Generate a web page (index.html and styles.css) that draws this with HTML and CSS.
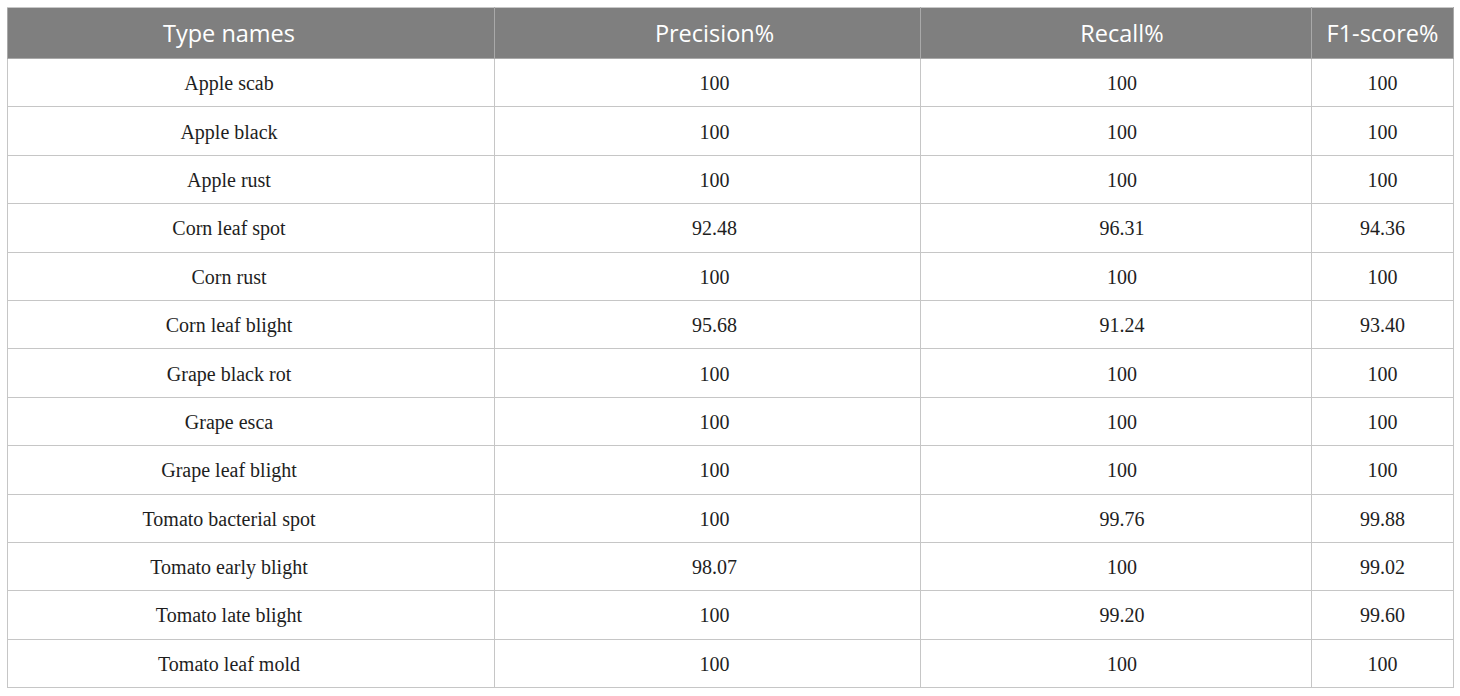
FILE: index.html
```html
<!DOCTYPE html>
<html>
<head>
<meta charset="utf-8">
<link rel="stylesheet" href="styles.css">
</head>
<body>
<table class="results">
  <colgroup>
    <col class="c1"><col class="c2"><col class="c3"><col class="c4">
  </colgroup>
  <thead>
    <tr><th class="k1">Type names</th><th class="k2">Precision%</th><th class="k3">Recall%</th><th class="k4">F1-score%</th></tr>
  </thead>
  <tbody>
    <tr><td class="k1">Apple scab</td><td class="k2">100</td><td class="k3">100</td><td class="k4">100</td></tr>
    <tr><td class="k1">Apple black</td><td class="k2">100</td><td class="k3">100</td><td class="k4">100</td></tr>
    <tr><td class="k1">Apple rust</td><td class="k2">100</td><td class="k3">100</td><td class="k4">100</td></tr>
    <tr><td class="k1">Corn leaf spot</td><td class="k2">92.48</td><td class="k3">96.31</td><td class="k4">94.36</td></tr>
    <tr><td class="k1">Corn rust</td><td class="k2">100</td><td class="k3">100</td><td class="k4">100</td></tr>
    <tr><td class="k1">Corn leaf blight</td><td class="k2">95.68</td><td class="k3">91.24</td><td class="k4">93.40</td></tr>
    <tr><td class="k1">Grape black rot</td><td class="k2">100</td><td class="k3">100</td><td class="k4">100</td></tr>
    <tr><td class="k1">Grape esca</td><td class="k2">100</td><td class="k3">100</td><td class="k4">100</td></tr>
    <tr><td class="k1">Grape leaf blight</td><td class="k2">100</td><td class="k3">100</td><td class="k4">100</td></tr>
    <tr><td class="k1">Tomato bacterial spot</td><td class="k2">100</td><td class="k3">99.76</td><td class="k4">99.88</td></tr>
    <tr><td class="k1">Tomato early blight</td><td class="k2">98.07</td><td class="k3">100</td><td class="k4">99.02</td></tr>
    <tr><td class="k1">Tomato late blight</td><td class="k2">100</td><td class="k3">99.20</td><td class="k4">99.60</td></tr>
    <tr><td class="k1">Tomato leaf mold</td><td class="k2">100</td><td class="k3">100</td><td class="k4">100</td></tr>
  </tbody>
</table>
</body>
</html>
```
FILE: styles.css
```css
html, body {
  margin: 0;
  background: #ffffff;
}
body {
  padding: 7px 8px 0 7px;
}
.results {
  border-collapse: collapse;
  table-layout: fixed;
  width: 1446px;
}
.c1 { width: 487px; }
.c2 { width: 426px; }
.c3 { width: 391px; }
.c4 { width: 142px; }
.results th {
  background: #7f7f7f;
  color: #ffffff;
  font-family: "Open Sans", "Noto Sans", sans-serif;
  font-weight: 400;
  font-size: 23.5px;
  height: 50px;
  padding: 0;
  text-align: center;
  vertical-align: middle;
  border: 1px solid #a9a9a9;
  border-top-color: #c8c8c8;
}
.results td {
  font-family: "Liberation Serif", "Times New Roman", serif;
  font-size: 20px;
  color: #1e1e1e;
  height: 45.4px;
  padding: 2px 0 0 0;
  text-align: center;
  vertical-align: middle;
  border: 1px solid #c6c6c6;
}
.results .k1 { padding-right: 44px; }
.results .k2 { padding-left: 14px; }
.results .k3 { padding-left: 12px; }
.results .k4 { padding-left: 0; }
```
